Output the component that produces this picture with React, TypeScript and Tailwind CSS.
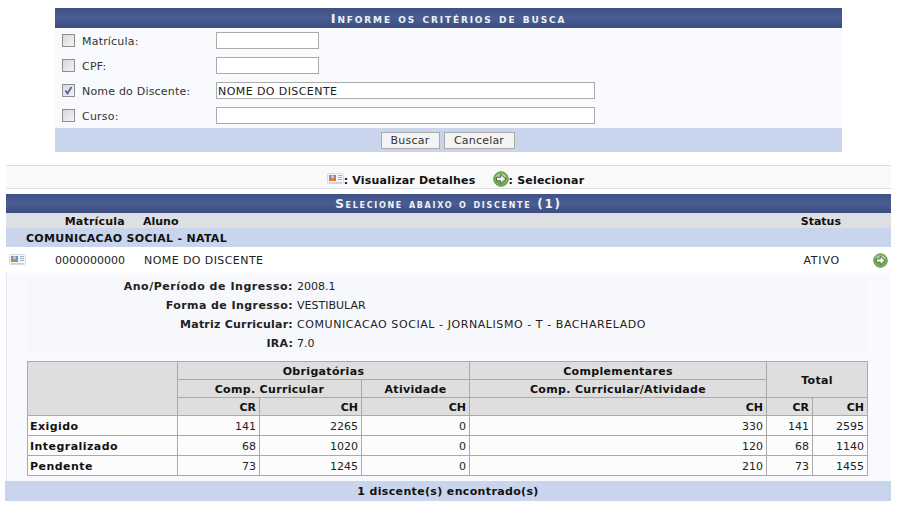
const font = "font-['DejaVu_Sans',Verdana,sans-serif]";

function CardIcon() {
  return (
    <svg width="17" height="11" viewBox="0 0 17 11" className="shrink-0">
      <rect x="0.5" y="0.5" width="16" height="10" rx="1" fill="#f3f6fa" stroke="#d3dae3" />
      <rect x="2" y="2" width="7" height="6" fill="#5f95d8" />
      <rect x="4" y="2.5" width="3" height="2.5" fill="#f0bd8c" />
      <rect x="3" y="5" width="5" height="3" fill="#d9803f" />
      <path d="M11 2.5h4M11 4.5h4M11 6.5h4" stroke="#9fb0c4" fill="none" />
      <path d="M2 9.5h13" stroke="#c6d0dc" fill="none" />
    </svg>
  );
}

function GoIcon({ size = 16 }: { size?: number }) {
  return (
    <svg width={size} height={size} viewBox="0 0 16 16" className="shrink-0">
      <circle cx="8" cy="8" r="7.3" fill="#6db04c" stroke="#6c9a5c" />
      <path d="M2.5 6a5.8 5.2 0 0 1 11 0z" fill="#a5d68a" />
      <path d="M3.5 6.2h4.2V3.2L12.8 8l-5.1 4.8V9.8H3.5z" fill="#eef0ec" stroke="#4f5a4b" strokeWidth="0.9" />
    </svg>
  );
}

function Check({ checked }: { checked?: boolean }) {
  return (
    <span className="flex h-[13px] w-[13px] items-center justify-center border border-[#8e8f8f] bg-gradient-to-br from-[#d8d8d8] to-[#f4f4f4]">
      {checked && (
        <svg width="9" height="9" viewBox="0 0 9 9">
          <path d="M1.5 4.5 3.5 7.5 7.5 1" stroke="#4a5fa8" strokeWidth="1.7" fill="none" />
        </svg>
      )}
    </span>
  );
}

const fields = [
  { label: "Matrícula:", width: "w-[103px]", value: "" },
  { label: "CPF:", width: "w-[103px]", value: "" },
  { label: "Nome do Discente:", width: "w-[379px]", value: "NOME DO DISCENTE", checked: true },
  { label: "Curso:", width: "w-[379px]", value: "" },
];

const details = [
  { k: "Ano/Período de Ingresso:", v: "2008.1", ks: "tracking-[0.54px]" },
  { k: "Forma de Ingresso:", v: "VESTIBULAR", ks: "tracking-[0.42px]" },
  { k: "Matriz Curricular:", v: "COMUNICACAO SOCIAL - JORNALISMO - T - BACHARELADO", ks: "tracking-[0.22px]", vs: "tracking-[0.57px]" },
  { k: "IRA:", v: "7.0", ks: "tracking-[0.2px]" },
];

const rows = [
  ["Exigido", "141", "2265", "0", "330", "141", "2595"],
  ["Integralizado", "68", "1020", "0", "120", "68", "1140"],
  ["Pendente", "73", "1245", "0", "210", "73", "1455"],
];

const th = "border border-[#aaaaaa] bg-[#dedede] px-0 pt-[2px] pb-0 text-center font-bold leading-[15px] tracking-[0.33px]";
const thRight = "border border-[#aaaaaa] bg-[#dedede] pt-[2px] pb-0 pr-[3px] pl-0 text-right font-bold leading-[15px]";

export default function App() {
  return (
    <div className={`${font} h-[505px] w-[897px] overflow-hidden bg-white pt-2 text-[11px] text-[#222222]`}>
      {/* Form */}
      <div className="ml-[55px] w-[787px] bg-[#f8fafd]">
        <div className="flex h-5 items-center justify-center bg-gradient-to-b from-[#3f5184] via-[#4a5d92] to-[#3c4d80] pt-[1px] text-[13px] font-bold tracking-[1.85px] text-[#eef1f8] [font-variant:small-caps]">
          Informe os critérios de busca
        </div>
        {fields.map((f) => (
          <div key={f.label} className="flex h-[25px] items-center">
            <span className="ml-[7px] mr-[7px]"><Check checked={f.checked} /></span>
            <span className="w-[134px] pt-[4px] tracking-[0.2px] text-[#333333]">{f.label}</span>
            <div className={`${f.width} flex h-[17px] items-center border border-[#aaaaaa] bg-white pl-[1px] pt-[4px] tracking-[0.42px] text-[#222222]`}>
              {f.value}
            </div>
          </div>
        ))}
        <div className="flex h-[24px] items-center justify-center gap-[4px] bg-[#c8d5ec] pr-[2px]">
          <div className="flex h-[17px] w-[59px] items-center justify-center border border-[#aaaaaa] bg-[#f4f4f4] pt-[3px] tracking-[0.2px] text-[#333333]">Buscar</div>
          <div className="flex h-[17px] w-[71px] items-center justify-center border border-[#aaaaaa] bg-[#f4f4f4] pt-[3px] tracking-[0.2px] text-[#333333]">Cancelar</div>
        </div>
      </div>

      {/* Legend */}
      <div className="ml-[6px] mt-[13px] flex h-[24px] w-[885px] items-center justify-center border-y border-[#dddddd] bg-[#f9f9f9] pl-[14px] font-bold tracking-[0.2px] text-[#111111]">
        <span className="mt-[3px]"><CardIcon /></span>
        <span className="mt-[8px]">: Visualizar Detalhes</span>
        <span className="ml-[17px] mt-[3px]"><GoIcon /></span>
        <span className="mt-[8px]">: Selecionar</span>
      </div>

      {/* Result list */}
      <div className="ml-[6px] mt-[5px] w-[885px]">
        <div className="flex h-[19px] items-center justify-center bg-gradient-to-b from-[#3f5184] via-[#4a5d92] to-[#3c4d80] pt-[1px] text-[12px] font-bold tracking-[1.7px] text-[#eef1f8] [font-variant:small-caps]">
          Selecione abaixo o discente (1)
        </div>
        <div className="flex h-[15px] items-center bg-[#dedfe3] pt-[3px] font-bold text-[#111111]">
          <span className="w-[119px] text-right tracking-[0.22px]">Matrícula</span>
          <span className="ml-[18px]">Aluno</span>
          <span className="ml-auto mr-[50px]">Status</span>
        </div>
        <div className="flex h-[19px] items-center bg-[#c8d5ec] pl-5 pt-[3px] font-bold tracking-[0.3px] text-[#111111]">COMUNICACAO SOCIAL - NATAL</div>
        <div className="flex h-[26px] items-center bg-white text-[#222222]">
          <span className="ml-[3px] -mt-[1px]"><CardIcon /></span>
          <span className="ml-[29px] w-[70px] pt-[3px] text-right">0000000000</span>
          <span className="ml-[19px] pt-[3px] tracking-[0.42px]">NOME DO DISCENTE</span>
          <span className="ml-auto pt-[3px] tracking-[0.8px]">ATIVO</span>
          <span className="ml-[33px] mr-[3px]"><GoIcon size={15} /></span>
        </div>
        <div className="border-l border-[#e8e8ec] bg-[#f9fafd] pt-[4px]">
          <div className="ml-[20px] w-[841px] bg-[#f7f8fb]">
            {details.map((d) => (
              <div key={d.k} className="flex h-[19px] items-center pt-[1px]">
                <span className={`w-[266px] shrink-0 text-right font-bold text-[#222222] ${d.ks}`}>{d.k}</span>
                <span className={`ml-[4px] text-[#222222] ${d.vs ?? ""}`}>{d.v}</span>
              </div>
            ))}
          </div>
          <table className="ml-[20px] mt-[8px] w-[840px] table-fixed border-collapse">
            <colgroup>
              <col className="w-[150px]" />
              <col className="w-[82px]" />
              <col className="w-[102px]" />
              <col className="w-[108px]" />
              <col className="w-[297px]" />
              <col className="w-[46px]" />
              <col className="w-[55px]" />
            </colgroup>
            <thead className="text-[#111111]">
              <tr className="h-[18px]">
                <th rowSpan={3} className={th}></th>
                <th colSpan={3} className={th}>Obrigatórias</th>
                <th className={th}>Complementares</th>
                <th rowSpan={2} colSpan={2} className={th}>Total</th>
              </tr>
              <tr className="h-[18px]">
                <th colSpan={2} className={th}>Comp. Curricular</th>
                <th className={th}>Atividade</th>
                <th className={th}>Comp. Curricular/Atividade</th>
              </tr>
              <tr className="h-[18px]">
                <th className={thRight}>CR</th>
                <th className={thRight}>CH</th>
                <th className={thRight}>CH</th>
                <th className={thRight}>CH</th>
                <th className={thRight}>CR</th>
                <th className={thRight}>CH</th>
              </tr>
            </thead>
            <tbody>
              {rows.map((r) => (
                <tr key={r[0]} className="h-5">
                  {r.map((c, i) =>
                    i === 0 ? (
                      <td key={i} className="border border-[#aaaaaa] bg-[#fcfcfc] pt-[2px] pb-0 pl-[2px] font-bold leading-[15px] tracking-[0.45px] text-[#111111]">{c}</td>
                    ) : (
                      <td key={i} className="border border-[#aaaaaa] bg-[#fcfcfc] pt-[2px] pb-0 pr-[3px] text-right leading-[15px] text-[#222222]">{c}</td>
                    ),
                  )}
                </tr>
              ))}
            </tbody>
          </table>
          <div className="h-[5px]" />
        </div>
        <div className="-ml-px flex h-[20px] w-[886px] items-center justify-center bg-[#c8d5ec] pt-[3px] font-bold tracking-[0.35px] text-[#111111]">1 discente(s) encontrado(s)</div>
      </div>
    </div>
  );
}
